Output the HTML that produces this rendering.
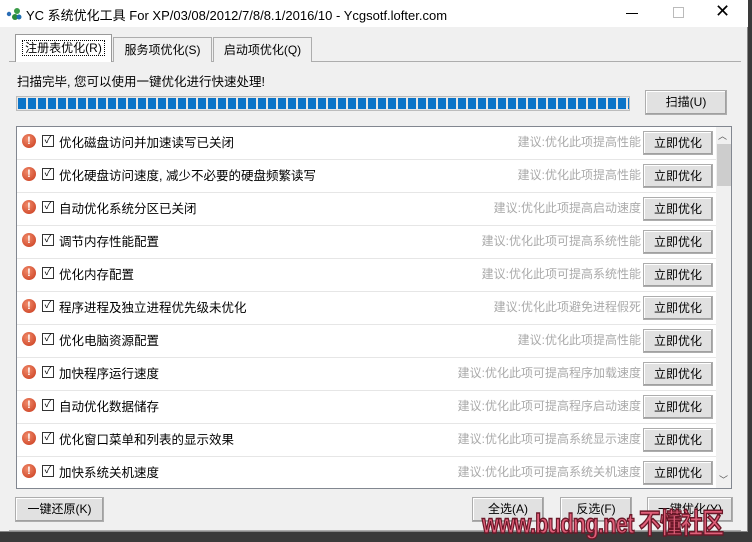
<!DOCTYPE html><html><head><meta charset="utf-8"><style>
*{box-sizing:border-box}
body{margin:0;width:752px;height:542px;background:#3a3a3a;font-family:"Liberation Sans","Noto Sans CJK SC",sans-serif;font-size:12px;color:#000;position:relative;overflow:hidden}
.win{position:absolute;left:0;top:0;width:748px;height:532px;background:#f0f0f0;border-right:1px solid #888;border-bottom:1px solid #888}
.title{position:absolute;left:0;top:0;width:748px;height:27px;background:#fff;font-size:13px}
.title span{position:absolute;left:26px;top:5px}
.btn{position:absolute;background:#e1e1e1;border:1px solid #adadad;box-shadow:inset -1px -1px 0 #a0a0a0,inset 1px 1px 0 #fff;text-align:center;font-size:12px;line-height:22px}
.tab{position:absolute;top:37px;height:25px;border:1px solid #adadad;border-bottom:none;background:#f0f0f0;line-height:24px;text-align:center}
.list{position:absolute;left:16px;top:126px;width:716px;height:363px;background:#fff;border:1px solid #828790;overflow:hidden}
.row{position:absolute;left:0;width:699px;height:33px;border-bottom:1px solid #e6e6e6}
.ic{position:absolute;left:5px;top:7px;width:14px;height:14px;border-radius:50%;background:radial-gradient(circle at 40% 35%,#f08a6a,#c8381a);color:#fff;font-weight:bold;font-size:11px;text-align:center;line-height:14px}
.cb{position:absolute;left:25px;top:8px;width:12px;height:12px;border:1px solid #333;background:#fff;font-size:10px;line-height:10px;text-align:center}
.lb{position:absolute;left:42px;top:5px;font-size:12.5px}
.sg{position:absolute;right:75px;top:6px;color:#aaa;font-size:12px}
.row .btn{left:626px;top:4px;width:70px;height:24px}
</style></head><body>
<div class="win">
<div class="title"><svg style="position:absolute;left:6px;top:7px" width="16" height="14"><circle cx="3" cy="7" r="2.2" fill="#2a6db5"/><circle cx="11" cy="4" r="3" fill="#3a9b48"/><circle cx="9" cy="10" r="3" fill="#2a8a3a"/><circle cx="13" cy="10" r="2.5" fill="#1f6fb0"/></svg><span>YC 系统优化工具 For XP/03/08/2012/7/8/8.1/2016/10 - Ycgsotf.lofter.com</span>
<div style="position:absolute;left:626px;top:13px;width:12px;border-top:1px solid #000"></div>
<div style="position:absolute;left:673px;top:7px;width:11px;height:11px;border:1px solid #bbb"></div>
<div style="position:absolute;left:715px;top:1px;font-size:18px">✕</div></div>
<div style="position:absolute;left:9px;top:61px;width:732px;height:1px;background:#adadad"></div>
<div class="tab" style="left:15px;top:34px;width:97px;height:28px;background:#fff;border-color:#999;line-height:27px"><span style="border:1px dotted #000;padding:0 2px">注册表优化(R)</span></div>
<div class="tab" style="left:113px;width:99px">服务项优化(S)</div>
<div class="tab" style="left:213px;width:99px">启动项优化(Q)</div>
<div style="position:absolute;left:17px;top:71px;font-size:12.5px">扫描完毕, 您可以使用一键优化进行快速处理!</div>
<div style="position:absolute;left:16px;top:96px;width:614px;height:15px;border:1px solid #bcbcbc;background:#e6e6e6;padding:1px"><div style="width:611px;height:11px;background:repeating-linear-gradient(90deg,#0b74c8 0 8px,#e6e6e6 8px 10px)"></div></div>
<div class="btn" style="left:645px;top:90px;width:82px;height:25px">扫描(U)</div>
<div class="list">
<div class="row" style="top:0"><div class="ic">!</div><div class="cb">✓</div><div class="lb">优化磁盘访问并加速读写已关闭</div><div class="sg">建议:优化此项提高性能</div><div class="btn">立即优化</div></div>
<div class="row" style="top:33px"><div class="ic">!</div><div class="cb">✓</div><div class="lb">优化硬盘访问速度, 减少不必要的硬盘频繁读写</div><div class="sg">建议:优化此项提高性能</div><div class="btn">立即优化</div></div>
<div class="row" style="top:66px"><div class="ic">!</div><div class="cb">✓</div><div class="lb">自动优化系统分区已关闭</div><div class="sg">建议:优化此项提高启动速度</div><div class="btn">立即优化</div></div>
<div class="row" style="top:99px"><div class="ic">!</div><div class="cb">✓</div><div class="lb">调节内存性能配置</div><div class="sg">建议:优化此项可提高系统性能</div><div class="btn">立即优化</div></div>
<div class="row" style="top:132px"><div class="ic">!</div><div class="cb">✓</div><div class="lb">优化内存配置</div><div class="sg">建议:优化此项可提高系统性能</div><div class="btn">立即优化</div></div>
<div class="row" style="top:165px"><div class="ic">!</div><div class="cb">✓</div><div class="lb">程序进程及独立进程优先级未优化</div><div class="sg">建议:优化此项避免进程假死</div><div class="btn">立即优化</div></div>
<div class="row" style="top:198px"><div class="ic">!</div><div class="cb">✓</div><div class="lb">优化电脑资源配置</div><div class="sg">建议:优化此项提高性能</div><div class="btn">立即优化</div></div>
<div class="row" style="top:231px"><div class="ic">!</div><div class="cb">✓</div><div class="lb">加快程序运行速度</div><div class="sg">建议:优化此项可提高程序加载速度</div><div class="btn">立即优化</div></div>
<div class="row" style="top:264px"><div class="ic">!</div><div class="cb">✓</div><div class="lb">自动优化数据储存</div><div class="sg">建议:优化此项可提高程序启动速度</div><div class="btn">立即优化</div></div>
<div class="row" style="top:297px"><div class="ic">!</div><div class="cb">✓</div><div class="lb">优化窗口菜单和列表的显示效果</div><div class="sg">建议:优化此项可提高系统显示速度</div><div class="btn">立即优化</div></div>
<div class="row" style="top:330px"><div class="ic">!</div><div class="cb">✓</div><div class="lb">加快系统关机速度</div><div class="sg">建议:优化此项可提高系统关机速度</div><div class="btn">立即优化</div></div>
<div style="position:absolute;left:699px;top:0;width:16px;height:361px;background:#f0f0f0"><div style="position:absolute;left:2px;top:2px;font-size:9px;color:#555">︿</div><div style="position:absolute;left:1px;top:17px;width:14px;height:42px;background:#cdcdcd"></div><div style="position:absolute;left:3px;top:346px;font-size:9px;color:#555">﹀</div></div>
</div>
<div class="btn" style="left:15px;top:497px;width:89px;height:25px">一键还原(K)</div>
<div class="btn" style="left:472px;top:497px;width:72px;height:25px">全选(A)</div>
<div class="btn" style="left:560px;top:497px;width:72px;height:25px">反选(F)</div>
<div class="btn" style="left:647px;top:497px;width:86px;height:25px">一键优化(Y)</div>
<div style="position:absolute;left:9px;top:530px;width:732px;height:1px;background:#adadad"></div>
</div>
<div style="position:absolute;left:482px;top:502px;font-size:28px;font-weight:bold;color:#e0607a;-webkit-text-stroke:1.5px #6a1828;letter-spacing:-1px;transform:scaleX(0.78);transform-origin:left;white-space:nowrap">www.budng.net 不懂社区</div>
</body></html>
